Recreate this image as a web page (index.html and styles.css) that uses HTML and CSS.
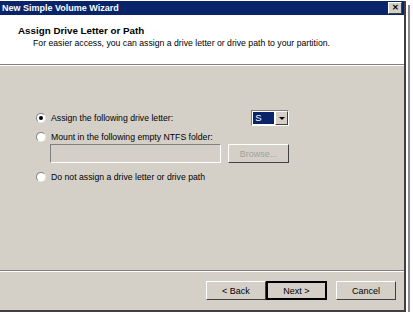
FILE: index.html
```html
<!DOCTYPE html>
<html lang="en">
<head>
    <meta charset="UTF-8">
    <title>New Simple Volume Wizard</title>
    <link rel="stylesheet" href="styles.css">
</head>
<body>
    <div class="window">
        <div class="titlebar">
            <span class="title-text">New Simple Volume Wizard</span>
            <span class="close-btn">&#x2715;</span>
        </div>
        <div class="header">
            <div class="heading">Assign Drive Letter or Path</div>
            <div class="subheading">For easier access, you can assign a drive letter or drive path to your partition.</div>
        </div>
        <div class="separator"></div>
        <div class="content">
            <div class="option">
                <span class="radio checked"></span>
                <span class="label">Assign the following drive letter:</span>
                <div class="dropdown">
                    <span class="dropdown-value"><span class="selected">S</span></span>
                    <span class="dropdown-arrow"></span>
                </div>
            </div>
            <div class="option">
                <span class="radio"></span>
                <span class="label">Mount in the following empty NTFS folder:</span>
            </div>
            <div class="folder-row">
                <div class="folder-input"></div>
                <div class="btn btn-disabled">Browse...</div>
            </div>
            <div class="option">
                <span class="radio"></span>
                <span class="label">Do not assign a drive letter or drive path</span>
            </div>
        </div>
        <div class="separator"></div>
        <div class="footer">
            <div class="btn">&lt; Back</div>
            <div class="btn btn-default">Next &gt;</div>
            <div class="btn btn-cancel">Cancel</div>
        </div>
    </div>
</body>
</html>
```

FILE: styles.css
```css
body {
    margin: 0;
    background: #ffffff;
    font-family: "Liberation Sans", Arial, sans-serif;
    font-size: 8.7px;
    color: #000;
}
.window {
    width: 404px;
    height: 309px;
    margin-top: 1px;
    background: #d4d0c8;
    border-right: 2px solid #404040;
    border-bottom: 2px solid #404040;
    box-shadow: 2px 2px 0 #ffffff, 4px 4px 0 #8a8a8a;
    display: flex;
    flex-direction: column;
}
.titlebar {
    height: 14px;
    background: #0a246a;
    display: flex;
    align-items: center;
    justify-content: space-between;
    padding: 0 2px 0 2px;
}
.title-text {
    color: #ffffff;
    font-weight: bold;
    font-size: 9px;
}
.close-btn {
    width: 12px;
    height: 10px;
    background: #d4d0c8;
    border: 1px solid;
    border-color: #ffffff #404040 #404040 #ffffff;
    font-size: 8px;
    font-weight: bold;
    line-height: 10px;
    text-align: center;
}
.header {
    height: 49px;
    background: #ffffff;
    padding-left: 18px;
    box-sizing: border-box;
    padding-top: 10px;
}
.heading {
    font-weight: bold;
    font-size: 9.8px;
}
.subheading {
    margin-top: 2px;
    padding-left: 15px;
}
.separator {
    height: 1px;
    background: #808080;
    border-bottom: 1px solid #ffffff;
}
.content {
    flex: 1;
    padding: 45px 0 0 36px;
}
.option {
    display: flex;
    align-items: center;
    height: 14px;
    margin-bottom: 5px;
}
.radio {
    width: 8px;
    height: 8px;
    border-radius: 50%;
    background: #ffffff;
    border: 1px solid;
    border-color: #808080 #e8e8e8 #e8e8e8 #808080;
    margin-right: 5px;
    display: flex;
    align-items: center;
    justify-content: center;
}
.radio.checked::after {
    content: "";
    width: 4px;
    height: 4px;
    border-radius: 50%;
    background: #000;
}
.dropdown {
    flex: none;
    margin-left: 78px;
    height: 14px;
    display: flex;
    background: #ffffff;
    border: 1px solid;
    border-color: #808080 #ffffff #ffffff #808080;
}
.dropdown-value {
    width: 21px;
    padding: 1px;
}
.selected {
    display: block;
    height: 100%;
    background: #0a246a;
    color: #ffffff;
    padding-left: 2px;
    line-height: 12px;
    font-size: 9.5px;
}
.dropdown-arrow {
    width: 11px;
    background: #d4d0c8;
    border: 1px solid;
    border-color: #ffffff #404040 #404040 #ffffff;
    display: flex;
    align-items: center;
    justify-content: center;
}
.dropdown-arrow::after {
    content: "";
    border-left: 3px solid transparent;
    border-right: 3px solid transparent;
    border-top: 3px solid #000;
}
.folder-row {
    display: flex;
    margin: -5px 0 7px 14px;
    gap: 7px;
}
.folder-input {
    width: 169px;
    height: 17px;
    background: #d4d0c8;
    border: 1px solid;
    border-color: #808080 #ffffff #ffffff #808080;
}
.btn {
    width: 59px;
    height: 17px;
    box-sizing: border-box;
    background: #d4d0c8;
    border: 1px solid;
    border-color: #ffffff #404040 #404040 #ffffff;
    display: flex;
    align-items: center;
    justify-content: center;
    font-size: 9px;
}
.folder-row .btn {
    height: 19px;
    width: 61px;
}
.btn-disabled {
    color: #a0a0a0;
}
.footer {
    height: 38px;
    display: flex;
    align-items: flex-start;
    padding: 9px 0 0 206px;
    box-sizing: border-box;
}
.footer .btn {
    width: 60px;
    height: 19px;
}
.footer .btn-default {
    width: 61px;
    border: 2px solid #000;
}
.footer .btn-cancel {
    margin-left: 9px;
}
```
